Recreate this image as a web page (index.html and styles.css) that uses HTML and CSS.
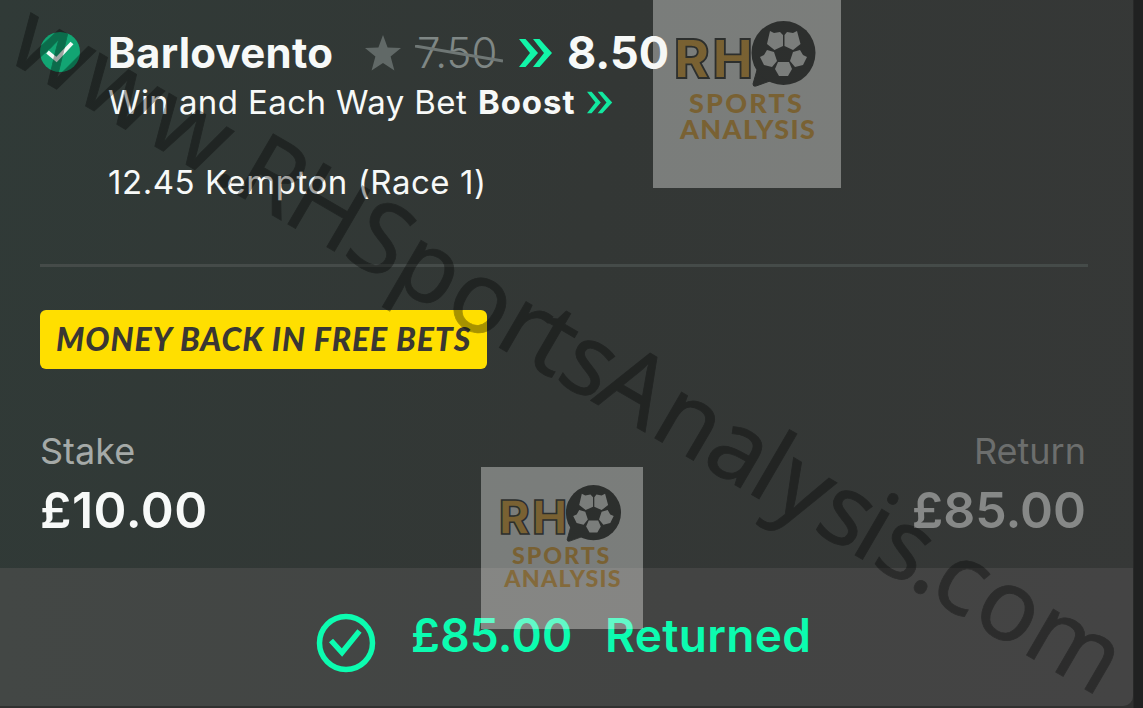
FILE: index.html
```html
<!DOCTYPE html>
<html lang="en">
<head>
  <meta charset="UTF-8" />
  <meta name="viewport" content="width=device-width, initial-scale=1.0" />
  <title>Bet Returned</title>
  <link rel="stylesheet" href="styles.css">
</head>
<body>
  <div class="card">
    <div class="details">
      <div class="selection">
        <svg class="won-icon" viewBox="0 0 40 40">
          <circle cx="20" cy="20" r="20" fill="#12a573" />
          <path d="M7.5 20 L16.5 27.500 L32 11" fill="none" stroke="#f2faf6" stroke-width="4" />
        </svg>
        <span class="name">Barlovento</span>
        <svg class="star" viewBox="0 0 36 36">
          <path d="M18 0 L22.6 12.4 L36 13 L25.6 21.4 L29.4 35.5 L18 28 L6.6 35.5 L10.4 21.4 L0 13 L13.4 12.4 Z" fill="#616967" />
        </svg>
        <span class="old-odds">7.50
          <svg class="strike" viewBox="0 0 88 18"><path d="M0 1 L88 16" stroke="#6f7775" stroke-width="3" /></svg>
        </span>
        <svg class="arrows" viewBox="0 0 34 30">
          <path d="M0 1 H6.500 L19 15 L6.500 29 H0 L11 15 Z M14 1 H20.500 L33 15 L20.500 29 H14 L25 15 Z" fill="#12f5a8" />
        </svg>
        <span class="odds">8.50</span>
      </div>
      <div class="market">
        <span class="market-name">Win and Each Way Bet</span>
        <b>Boost</b>
        <svg class="arrows-small" viewBox="0 0 34 30">
          <path d="M0 1 H6 L18 15 L6 29 H0 L11 15 Z M14 1 H20 L33 15 L20 29 H14 L25.500 15 Z" fill="#12e8a0" />
        </svg>
      </div>
      <div class="event">12.45 Kempton (Race 1)</div>
      <div class="divider"></div>
      <div class="offer">MONEY BACK IN FREE BETS</div>
      <div class="totals">
        <div class="total">
          <div class="label">Stake</div>
          <div class="value">£10.00</div>
        </div>
        <div class="total return">
          <div class="label">Return</div>
          <div class="value">£85.00</div>
        </div>
      </div>
    </div>
    <div class="result">
      <svg class="result-icon" viewBox="0 0 60 60">
        <circle cx="30" cy="30" r="26.500" fill="none" stroke="#0cfcb0" stroke-width="5.500" />
        <path d="M15 27.500 L26 39.500 L43.500 18" fill="none" stroke="#0cfcb0" stroke-width="5.500" />
      </svg>
      <span class="result-amount">£85.00</span>
      <span class="result-text">Returned</span>
    </div>
  </div>

  <!-- site watermark -->
  <svg class="watermark" viewBox="0 0 1143 708">
    <text transform="translate(3 58) rotate(30.25)" x="0 80 160 239.5 262 320 391 444.500 506.500 566 601.500 637 680 746 806 858 884 935 978 1003 1046 1068.500 1117.500 1176.500">www.RHSportsAnalysis.com</text>
  </svg>

  <svg class="logo logo-top" viewBox="0 0 188 188">
    <g id="logo">
      <rect width="188" height="188" fill="#f5f5f2" />
      <text class="logo-rh" x="21 59.500" y="78">RH</text>
      <path d="M104 70 L100 84 Q100 87 103 86 L117 81 Z" fill="#222" stroke="#222" />
      <circle cx="130.500" cy="53" r="32" fill="#222" />
      <g fill="#f5f5f2">
        <path d="M117 31 L121 33 L127 32 L130 35 V46 L121.500 50 L114 44 Z" />
        <path d="M144 31 L140 33 L134 32 L131.500 35 V46 L140 50 L147.500 44 Z" />
        <path d="M114 50 L121 52 L124 61 L119 67 L111 65 L107 57 L111 55 Z" />
        <path d="M147 50 L140 52 L137 61 L142 67 L150 65 L154 57 L150 55 Z" />
        <path d="M125 62 H136 L139 69 L135 76 H126 L122 69 Z" />
      </g>
      <text class="logo-name" x="36" y="112.500" textLength="113">SPORTS</text>
      <text class="logo-name" x="27" y="139" textLength="135">ANALYSIS</text>
    </g>
  </svg>
  <svg class="logo logo-bottom" viewBox="0 0 188 188"><use href="#logo" /></svg>
</body>
</html>
```
FILE: styles.css
```css
body {
  margin: 0;
  width: 1143px;
  height: 708px;
  overflow: hidden;
  position: relative;
  background: linear-gradient(to right, #303130 1133px, #202121 1134px);
  font-family: Inter, sans-serif;
  color: #f7f9f8;
}

.card {
  width: 1133px;
  height: 706px;
  border-radius: 0 0 10px 0;
  overflow: hidden;
  background: linear-gradient(100deg, #303a37 0%, #333735 50%, #363837 100%);
}

.details {
  box-sizing: border-box;
  height: 568px;
  padding: 28px 47px 0 40px;
}

.selection {
  display: flex;
  align-items: center;
  height: 50px;
  line-height: 50px;
  white-space: nowrap;
}

.won-icon {
  width: 40px;
  height: 40px;
  margin: -3px 29px 0 0;
}

.name {
  width: 224px;
  margin: 0 33px 0 -1px;
  font-size: 42px;
  font-weight: 700;
  letter-spacing: 0.25px;
}

.star {
  width: 36px;
  height: 36px;
  margin-right: 16px;
}

.old-odds {
  position: relative;
  width: 102px;
  font-size: 42px;
  font-weight: 350;
  color: #7f8785;
}

.strike {
  position: absolute;
  left: -2px;
  top: 17px;
  width: 88px;
  height: 18px;
}

.arrows {
  width: 34px;
  height: 30px;
  margin-right: 14px;
}

.odds {
  font-size: 45px;
  font-weight: 650;
}

.market {
  display: flex;
  align-items: center;
  height: 48px;
  padding-left: 68px;
  font-size: 33px;
  line-height: 48px;
  white-space: nowrap;
}

.market-name {
  width: 370px;
  letter-spacing: 0.4px;
}

.market b {
  width: 109px;
  font-weight: 700;
  letter-spacing: 0.9px;
}

.arrows-small {
  width: 26px;
  height: 23px;
}

.event {
  margin-top: 36px;
  padding-left: 68px;
  font-size: 33px;
  letter-spacing: 0.55px;
  line-height: 40px;
}

.divider {
  height: 3px;
  margin: 62px -2px 0 0;
  background: #454b49;
}

.offer {
  box-sizing: border-box;
  width: 447px;
  height: 59px;
  margin-top: 43px;
  padding-left: 16px;
  border-radius: 6px;
  background: #ffdf00;
  color: #3a3733;
  font-family: Lato, sans-serif;
  font-size: 32px;
  font-weight: 900;
  font-style: italic;
  letter-spacing: 0.95px;
  line-height: 58px;
  white-space: nowrap;
}

.totals {
  display: flex;
  justify-content: space-between;
  margin-top: 62px;
}

.label {
  font-size: 36px;
  line-height: 40px;
  color: #a5aaa8;
}

.value {
  margin-top: 9px;
  font-size: 50px;
  font-weight: 600;
  letter-spacing: 0.5px;
  line-height: 60px;
}

.return {
  text-align: right;
}

.return .label {
  color: #6c6e6d;
}

.return .value {
  color: #868887;
  letter-spacing: 0;
}

.result {
  display: flex;
  box-sizing: border-box;
  height: 138px;
  padding: 43px 0 0 316px;
  background: linear-gradient(to right, #434745, #434443 60%, #444);
  color: #0cfcb0;
  font-size: 46px;
  font-weight: 600;
  line-height: 48px;
  white-space: nowrap;
}

.result-icon {
  width: 60px;
  height: 60px;
  margin: 2px 35px 0 0;
}

.result-amount {
  width: 194px;
  letter-spacing: 0.2px;
}

.result-text {
  letter-spacing: 0.3px;
}

.watermark {
  position: absolute;
  left: 0;
  top: 0;
  width: 1143px;
  height: 708px;
  font-family: "Noto Sans", sans-serif;
  font-size: 99px;
  fill: #000;
  stroke: #000;
  stroke-width: 0.8px;
  opacity: 0.34;
}

.logo {
  position: absolute;
  opacity: 0.37;
}

.logo-top {
  left: 653px;
  top: 0;
  width: 188px;
  height: 188px;
}

.logo-bottom {
  left: 481px;
  top: 467px;
  width: 162px;
  height: 162px;
}

.logo-rh {
  font-size: 54px;
  font-weight: 800;
  fill: #f0aa2e;
  stroke: #222;
  stroke-width: 1.800px;
}

.logo-name {
  font-family: Lato, sans-serif;
  font-size: 27px;
  font-weight: 900;
  fill: #f0aa30;
}
```
